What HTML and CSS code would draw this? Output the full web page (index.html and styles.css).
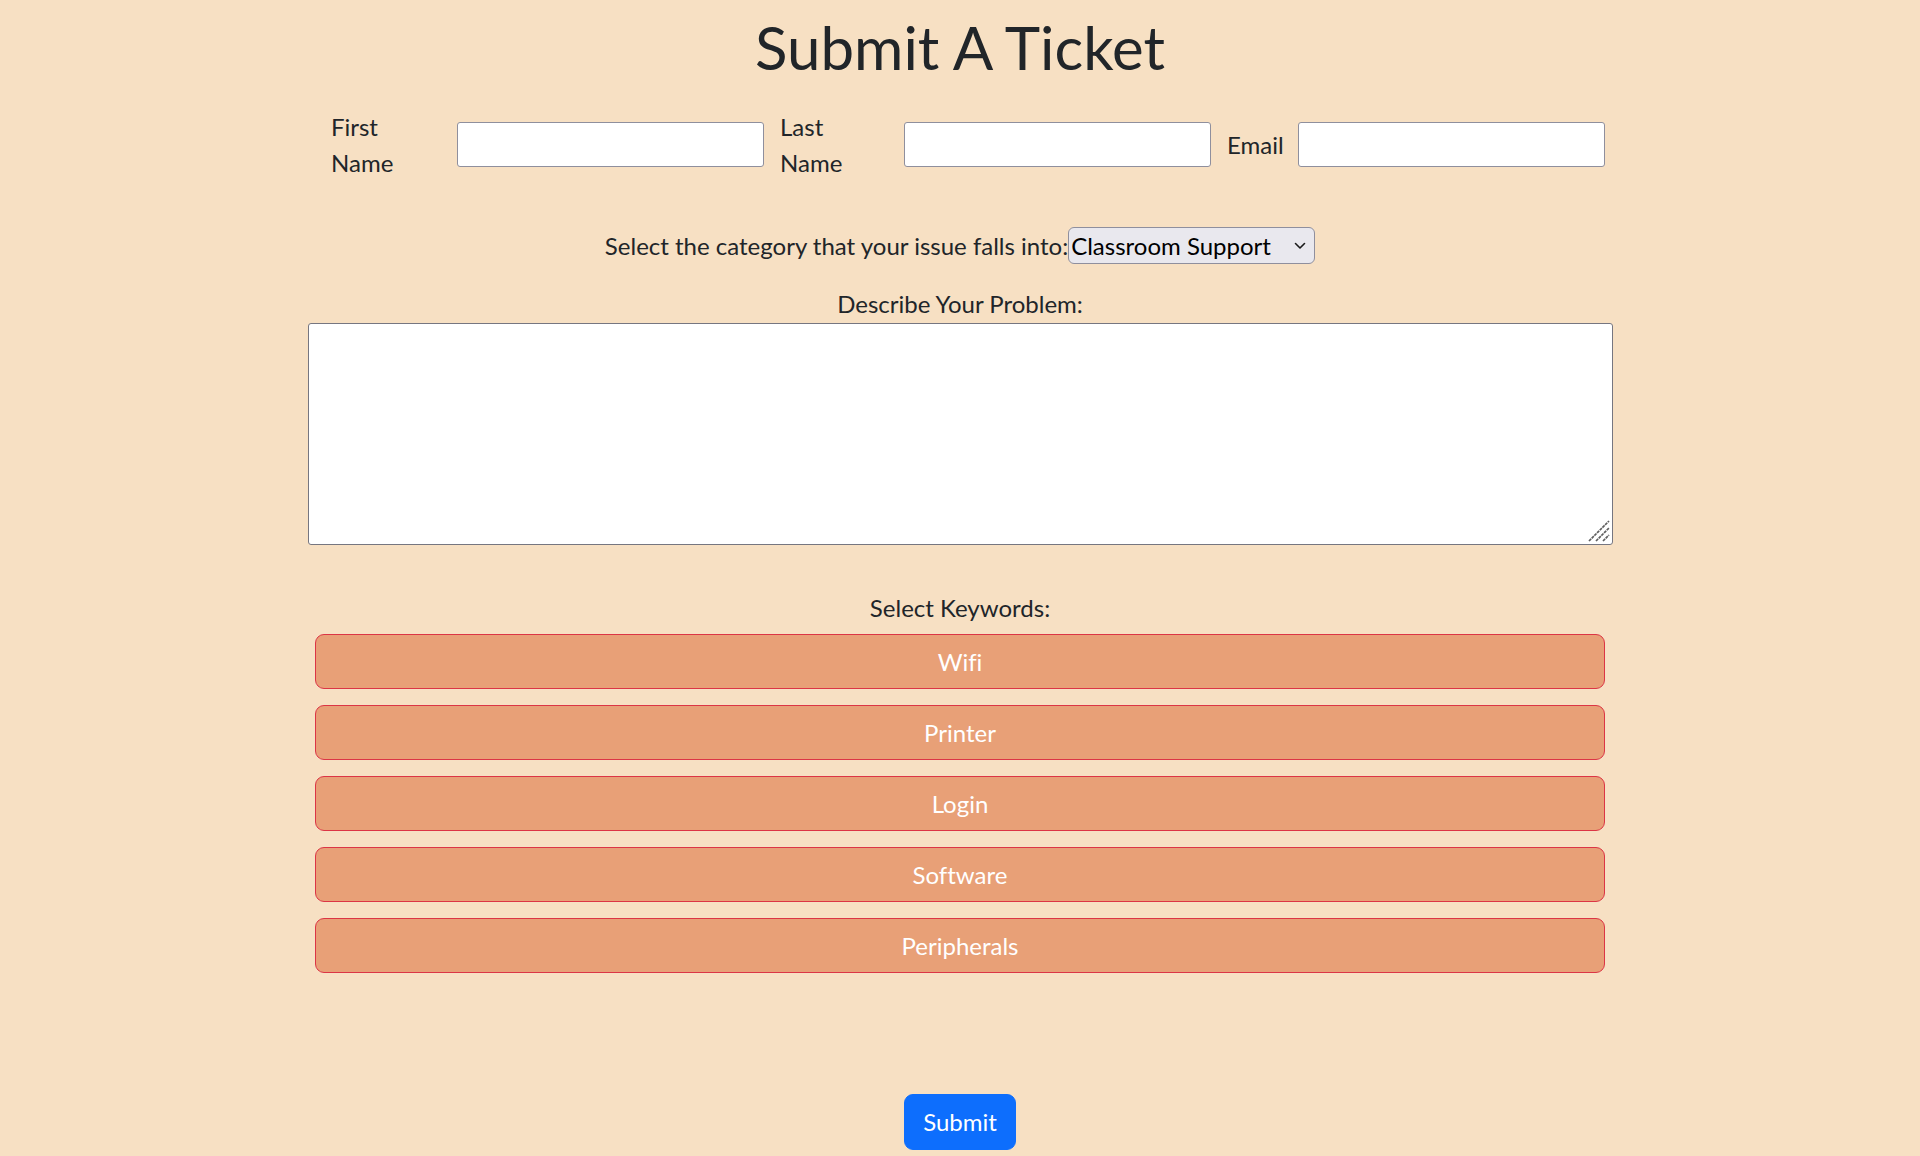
FILE: index.html
```html
<!DOCTYPE html>
<html lang="en">
<head>
<meta charset="utf-8">
<title>Submit A Ticket</title>
<link rel="stylesheet" href="styles.css">
</head>
<body>
<main class="page">
  <h1 class="title">Submit A Ticket</h1>
  <form class="ticket">
    <div class="name-row">
      <label class="lbl lbl-first" for="first">First Name</label>
      <input class="field" id="first" type="text">
      <label class="lbl lbl-last" for="last">Last Name</label>
      <input class="field" id="last" type="text">
      <label class="lbl lbl-email" for="email">Email</label>
      <input class="field" id="email" type="text">
    </div>

    <div class="category-row">
      <label for="cat">Select the category that your issue falls into:</label><span class="select-wrap"><select id="cat" class="select">
        <option>Classroom Support</option>
        <option>Network</option>
        <option>Hardware</option>
      </select><svg class="chev" width="12" height="8" viewBox="0 0 12 8" aria-hidden="true"><path d="M1.5 1.5 L6 6 L10.5 1.5" fill="none" stroke="#1a1a1a" stroke-width="1.6" stroke-linecap="round" stroke-linejoin="round"/></svg></span>
    </div>

    <div class="describe">
      <label class="describe-label" for="desc">Describe Your Problem:</label>
      <div class="desc-wrap">
        <textarea id="desc" class="desc"></textarea>
        <svg class="grip" width="22" height="22" viewBox="0 0 22 22" aria-hidden="true">
          <path d="M1 21 L21 1 M8 21 L21 8 M15 21 L21 15" stroke="#5f5f5f" stroke-width="1.7" stroke-dasharray="3 0.8" fill="none"/>
        </svg>
      </div>
    </div>

    <div class="keywords">
      <div class="kw-title">Select Keywords:</div>
      <button type="button" class="kw">Wifi</button>
      <button type="button" class="kw">Printer</button>
      <button type="button" class="kw">Login</button>
      <button type="button" class="kw">Software</button>
      <button type="button" class="kw">Peripherals</button>
    </div>

    <div class="submit-wrap">
      <button type="submit" class="submit">Submit</button>
    </div>
  </form>
</main>
</body>
</html>
```

FILE: styles.css
```css
html, body {
  margin: 0;
  padding: 0;
}

body {
  background: #f7e0c3;
  color: #212529;
  font-family: "Lato", "Open Sans", sans-serif;
  font-size: 24px;
  line-height: 36px;
  font-variant-ligatures: none;
}

.page {
  width: 1306px;
  margin: 0 auto;
  padding-top: 11px;
}

.title {
  margin: 0 0 26px;
  text-align: center;
  font-size: 60px;
  line-height: 72px;
  font-weight: 400;
}

.ticket {
  display: flex;
  flex-direction: column;
}

.name-row {
  display: flex;
  align-items: flex-start;
  gap: 16px;
  padding-left: 24px;
  height: 72px;
}

.lbl {
  flex: none;
}

.lbl-first { width: 110px; }
.lbl-last { width: 108px; }
.lbl-email { width: 55px; white-space: nowrap; margin-top: 18px; }

.field {
  flex: none;
  box-sizing: border-box;
  width: 307px;
  height: 45px;
  margin-top: 13px;
  border: 1px solid #8f8f9d;
  border-radius: 3px;
  background: #fff;
  font: inherit;
  padding: 1px 3px;
}

.category-row {
  margin-top: 46px;
  display: flex;
  justify-content: center;
  align-items: center;
  height: 37px;
}

.select-wrap {
  position: relative;
  display: inline-block;
}

.select {
  appearance: none;
  -webkit-appearance: none;
  box-sizing: border-box;
  width: 247px;
  height: 37px;
  border: 1px solid #8f8f9d;
  border-radius: 6px;
  background: #e9e8ee;
  color: #000;
  font: inherit;
  line-height: 34px;
  padding: 0 36px 0 2px;
  display: block;
}

.chev {
  position: absolute;
  right: 9px;
  top: 15px;
  pointer-events: none;
}

.describe {
  margin-top: 22px;
  display: flex;
  flex-direction: column;
  align-items: center;
}

.describe-label {
  display: block;
  margin-bottom: 1px;
}

.desc-wrap {
  position: relative;
  width: 1305px;
  height: 222px;
}

.desc {
  display: block;
  box-sizing: border-box;
  width: 1305px;
  height: 222px;
  border: 1px solid #767680;
  border-radius: 3px;
  background: #fff;
  font: inherit;
  margin: 0;
  resize: none;
}

.grip {
  position: absolute;
  right: 3px;
  bottom: 3px;
  pointer-events: none;
}

.keywords {
  margin-top: 45px;
  display: flex;
  flex-direction: column;
  align-items: center;
  gap: 16px;
}

.kw-title {
  margin-bottom: -8px;
}

.kw {
  box-sizing: border-box;
  width: 1290px;
  height: 55px;
  border: 1px solid #dc3545;
  border-radius: 9px;
  background: #e8a077;
  color: #fff;
  font: inherit;
  font-variant-ligatures: none;
  line-height: 36px;
  padding: 0 18px;
  cursor: pointer;
}

.submit-wrap {
  margin-top: 121px;
  display: flex;
  justify-content: center;
  padding-bottom: 40px;
}

.submit {
  box-sizing: border-box;
  height: 56px;
  border: 1px solid #0d6efd;
  border-radius: 9px;
  background: #0d6efd;
  color: #fff;
  font: inherit;
  line-height: 36px;
  padding: 0 18px;
  cursor: pointer;
}
```
